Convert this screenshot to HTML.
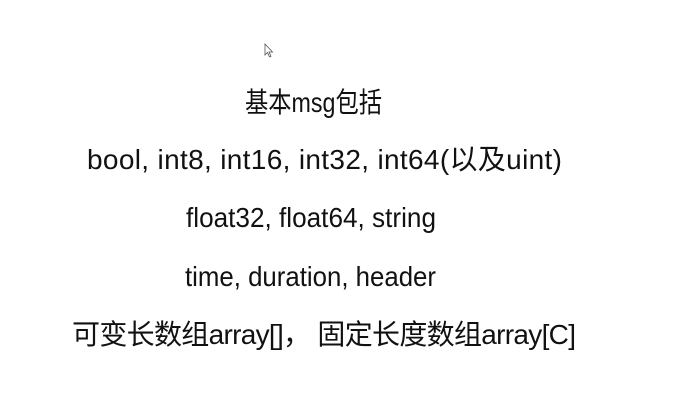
<!DOCTYPE html>
<html><head><meta charset="utf-8"><style>
html,body{margin:0;padding:0;background:#fff;width:697px;height:404px;overflow:hidden}
svg text{font-family:"Liberation Sans","Noto Sans CJK SC",sans-serif;font-size:28px;fill:#111}
</style></head><body>
<svg width="697" height="404" xmlns="http://www.w3.org/2000/svg">
<path d="M265 44 L265 55 L267.5 52.5 L269.5 57 L271 56.3 L269 52 L272.5 52 Z" fill="#fff" stroke="#555" stroke-width="0.8"/>
<text x="245" y="112" textLength="137" lengthAdjust="spacingAndGlyphs">基本msg包括</text>
<text x="87" y="169" textLength="475" lengthAdjust="spacing">bool, int8, int16, int32, int64(以及uint)</text>
<text x="186" y="227" textLength="250" lengthAdjust="spacingAndGlyphs">float32, float64, string</text>
<text x="185" y="286" textLength="251" lengthAdjust="spacingAndGlyphs">time, duration, header</text>
<text x="72" y="344" textLength="504" lengthAdjust="spacing">可变长数组array[]， 固定长度数组array[C]</text>
</svg>
</body></html>
